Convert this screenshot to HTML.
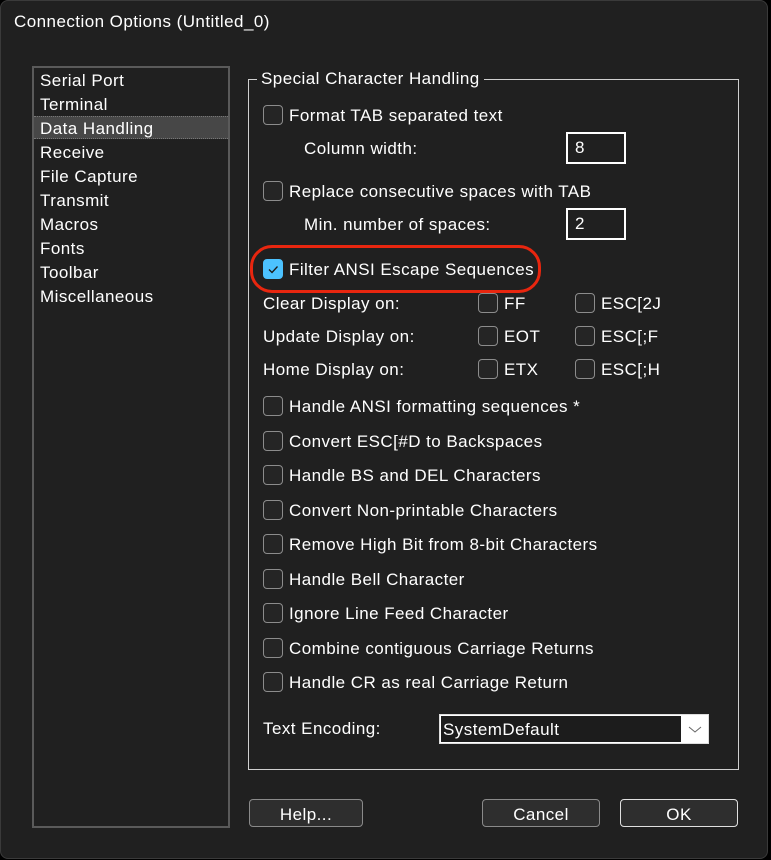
<!DOCTYPE html>
<html><head><style>
*{margin:0;padding:0;box-sizing:border-box}
body{width:771px;height:860px;background:#000;font-family:"Liberation Sans",sans-serif;color:#fff;font-size:17px;letter-spacing:0.45px;position:relative;overflow:hidden}
.win{position:absolute;left:0;top:0;width:768px;height:859px;background:#202020;border:1px solid #3a3a3a;border-radius:8px}
.a{position:absolute;white-space:nowrap;line-height:24px}
.cb{position:absolute;width:20px;height:20px;border:1px solid #8c8c8c;border-radius:4px;background:#252525}
.box{position:absolute;border:2px solid #fff;background:#202020}
.btn{position:absolute;height:28px;border:1px solid #8a8a8a;border-radius:4px;background:#2e2e2e;text-align:center;line-height:30px;font-size:17px}
</style></head><body>
<div class="win"></div>
<div class="a" style="left:14px;top:10px">Connection Options (Untitled_0)</div>
<div style="position:absolute;left:32px;top:66px;width:198px;height:762px;border:2px solid #5a5a5a"></div>
<div style="position:absolute;left:34px;top:116px;width:194px;height:23px;background:#474747;border-top:1px dotted #777;border-bottom:1px dotted #777"></div>
<div class="a" style="left:40px;top:69px">Serial Port</div>
<div class="a" style="left:40px;top:93px">Terminal</div>
<div class="a" style="left:40px;top:117px">Data Handling</div>
<div class="a" style="left:40px;top:141px">Receive</div>
<div class="a" style="left:40px;top:165px">File Capture</div>
<div class="a" style="left:40px;top:189px">Transmit</div>
<div class="a" style="left:40px;top:213px">Macros</div>
<div class="a" style="left:40px;top:237px">Fonts</div>
<div class="a" style="left:40px;top:261px">Toolbar</div>
<div class="a" style="left:40px;top:285px">Miscellaneous</div>

<div style="position:absolute;left:248px;top:79px;width:491px;height:691px;border:1px solid #d0d0d0"></div>
<div class="a" style="left:257px;top:67px;background:#202020;padding:0 4px">Special Character Handling</div>

<div class="cb" style="left:263px;top:105px"></div><div class="a" style="left:289px;top:104px">Format TAB separated text</div>
<div class="a" style="left:304px;top:137px">Column width:</div>
<div class="box" style="left:566px;top:132px;width:60px;height:32px"><span class="a" style="left:7px;top:2px">8</span></div>
<div class="cb" style="left:263px;top:181px"></div><div class="a" style="left:289px;top:180px">Replace consecutive spaces with TAB</div>
<div class="a" style="left:304px;top:213px">Min. number of spaces:</div>
<div class="box" style="left:566px;top:208px;width:60px;height:32px"><span class="a" style="left:7px;top:2px">2</span></div>

<div style="position:absolute;left:250px;top:245px;width:291px;height:48px;border:3px solid #e8260f;border-radius:22px"></div>
<div class="cb" style="left:263px;top:259px;background:#4cc2ff;border-color:#4cc2ff"><svg width="18" height="18" style="position:absolute;left:0;top:0"><path d="M5 9.5l3 3 5.5-6" stroke="#1a1a1a" stroke-width="1.3" fill="none"/></svg></div>
<div class="a" style="left:289px;top:258px">Filter ANSI Escape Sequences</div>

<div class="a" style="left:263px;top:292px">Clear Display on:</div>
<div class="cb" style="left:478px;top:293px"></div><div class="a" style="left:504px;top:292px">FF</div>
<div class="cb" style="left:575px;top:293px"></div><div class="a" style="left:601px;top:292px">ESC[2J</div>
<div class="a" style="left:263px;top:325px">Update Display on:</div>
<div class="cb" style="left:478px;top:326px"></div><div class="a" style="left:504px;top:325px">EOT</div>
<div class="cb" style="left:575px;top:326px"></div><div class="a" style="left:601px;top:325px">ESC[;F</div>
<div class="a" style="left:263px;top:358px">Home Display on:</div>
<div class="cb" style="left:478px;top:359px"></div><div class="a" style="left:504px;top:358px">ETX</div>
<div class="cb" style="left:575px;top:359px"></div><div class="a" style="left:601px;top:358px">ESC[;H</div>

<div class="cb" style="left:263px;top:396px"></div><div class="a" style="left:289px;top:395px">Handle ANSI formatting sequences *</div>
<div class="cb" style="left:263px;top:431px"></div><div class="a" style="left:289px;top:430px">Convert ESC[#D to Backspaces</div>
<div class="cb" style="left:263px;top:465px"></div><div class="a" style="left:289px;top:464px">Handle BS and DEL Characters</div>
<div class="cb" style="left:263px;top:500px"></div><div class="a" style="left:289px;top:499px">Convert Non-printable Characters</div>
<div class="cb" style="left:263px;top:534px"></div><div class="a" style="left:289px;top:533px">Remove High Bit from 8-bit Characters</div>
<div class="cb" style="left:263px;top:569px"></div><div class="a" style="left:289px;top:568px">Handle Bell Character</div>
<div class="cb" style="left:263px;top:603px"></div><div class="a" style="left:289px;top:602px">Ignore Line Feed Character</div>
<div class="cb" style="left:263px;top:638px"></div><div class="a" style="left:289px;top:637px">Combine contiguous Carriage Returns</div>
<div class="cb" style="left:263px;top:672px"></div><div class="a" style="left:289px;top:671px">Handle CR as real Carriage Return</div>

<div class="a" style="left:263px;top:717px">Text Encoding:</div>
<div style="position:absolute;left:439px;top:714px;width:270px;height:30px;border:1px solid #ddd;background:#fff">
<div style="position:absolute;left:1px;top:1px;width:240px;height:26px;background:#1c1c1c"></div>
<div class="a" style="left:3px;top:3px">SystemDefault</div>
<svg width="14" height="10" style="position:absolute;left:248px;top:10px"><path d="M1 2l6 5 6-5" stroke="#666" stroke-width="1" fill="none"/></svg>
</div>

<div class="btn" style="left:249px;top:799px;width:114px">Help...</div>
<div class="btn" style="left:482px;top:799px;width:118px">Cancel</div>
<div class="btn" style="left:620px;top:799px;width:118px;border-color:#e0e0e0">OK</div>
</body></html>
